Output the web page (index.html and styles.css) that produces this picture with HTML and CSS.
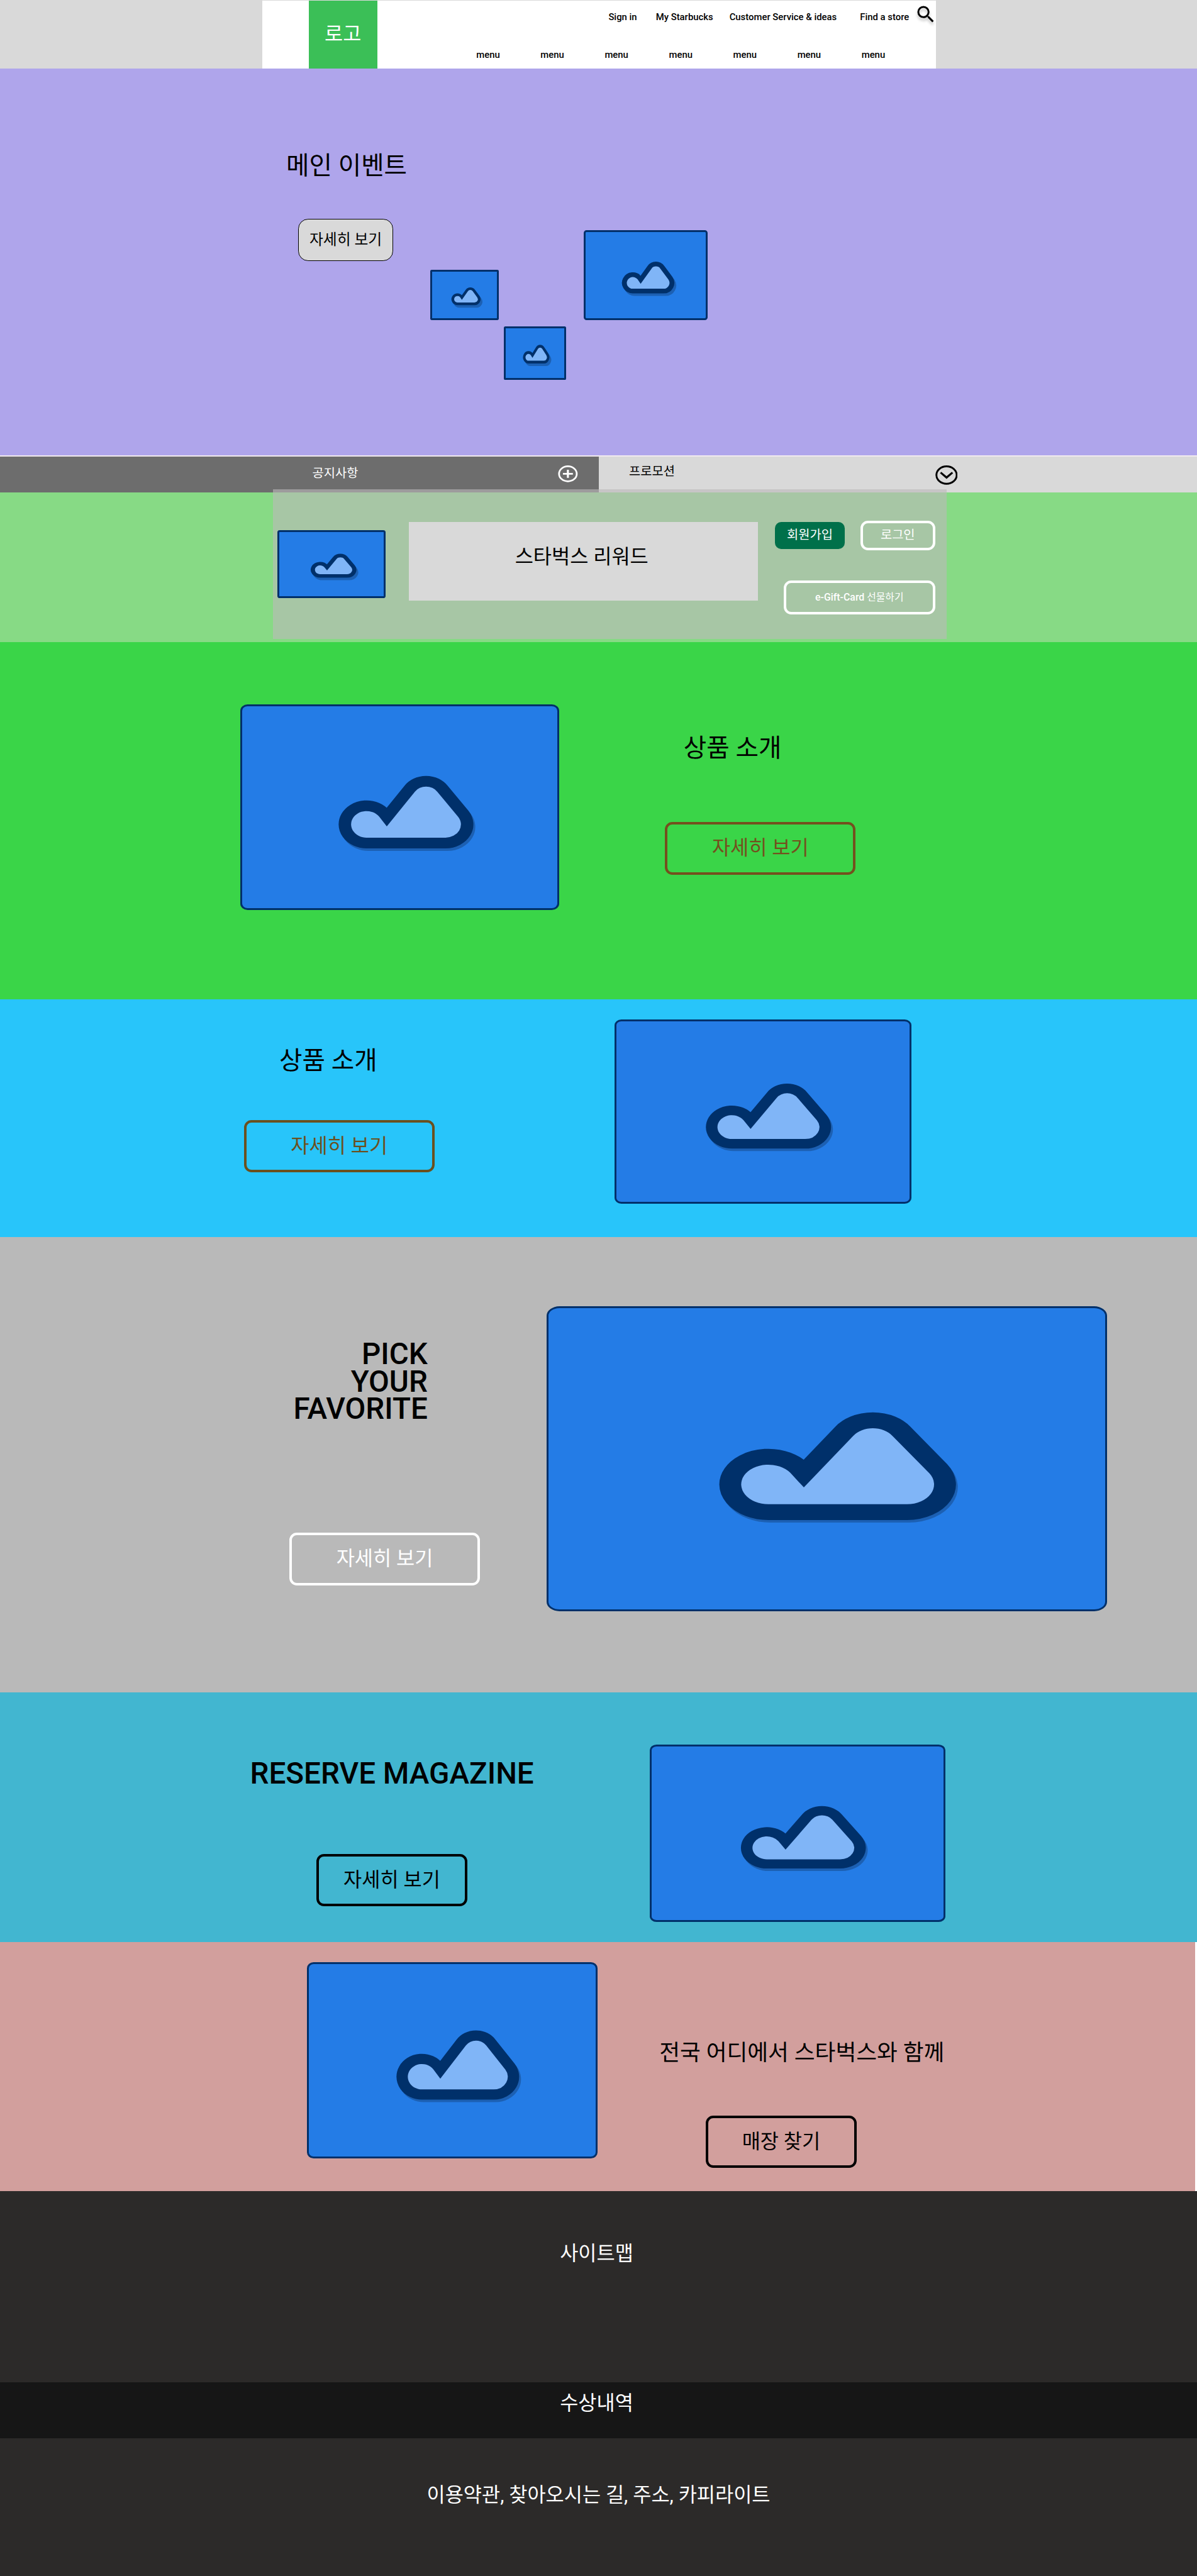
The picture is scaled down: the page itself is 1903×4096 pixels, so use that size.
FILE: index.html
```html
<!DOCTYPE html>
<html lang="ko">
<head>
<meta charset="utf-8">
<title>Starbucks</title>
<link rel="stylesheet" href="styles.css">
</head>
<body>
<svg class="defs" aria-hidden="true">
  <symbol id="picture" viewBox="0 0 256 192" preserveAspectRatio="none">
    <path d="M101.3 124.4A12.4 12.4 0 1 1 111.3 104.7L117.5 113.9L140.1 81.4A10.8 10.8 0 0 1 157.9 81.4L174.8 105A12.4 12.4 0 0 1 164.6 124.4Z" fill="#80b5f7" stroke="#00306a" stroke-width="20" paint-order="stroke"/>
  </symbol>
</svg>

<header class="header">
  <div class="header-inner">
    <div class="logo">로고</div>
    <nav class="nav">
      <div class="utility">
        <a>Sign in</a><a>My Starbucks</a><a>Customer Service &amp; ideas</a><a>Find a store</a>
        <svg class="search" viewBox="0 0 24 24"><path d="M15.5 14h-.79l-.28-.27A6.471 6.471 0 0 0 16 9.5 6.5 6.5 0 1 0 9.5 16c1.61 0 3.09-.59 4.23-1.57l.27.28v.79l5 4.99L20.49 19l-4.99-5zm-6 0C7.01 14 5 11.99 5 9.5S7.01 5 9.5 5 14 7.01 14 9.5 11.99 14 9.5 14z"/></svg>
      </div>
      <div class="menu"><a>menu</a><a>menu</a><a>menu</a><a>menu</a><a>menu</a><a>menu</a><a>menu</a></div>
    </nav>
  </div>
</header>

<main>
  <section class="hero">
    <div class="hero-copy">
      <h1 class="title">메인 이벤트</h1>
      <a class="hero-button">자세히 보기</a>
    </div>
    <div class="picture hero-a"><svg><use href="#picture"/></svg></div>
    <div class="picture hero-b"><svg><use href="#picture"/></svg></div>
    <div class="picture hero-c"><svg><use href="#picture"/></svg></div>
  </section>

  <section class="bar">
    <div class="notice">
      <span>공지사항</span>
      <svg viewBox="0 0 32 27" fill="none" stroke="#fff"><ellipse cx="16" cy="13.5" rx="14.2" ry="12" stroke-width="2.8"/><path d="M8 13.5H24" stroke-width="2.8"/><path d="M16 7V20" stroke-width="3.2"/></svg>
    </div>
    <div class="promotion">
      <span>프로모션</span>
      <svg viewBox="0 0 36 31" fill="none" stroke="#000"><ellipse cx="18" cy="15.5" rx="16.3" ry="14" stroke-width="3"/><path d="M8.500 11.500L18 19.500L27.500 11.500" stroke-width="3.2"/></svg>
    </div>
  </section>

  <section class="rewards">
    <div class="rewards-panel">
      <div class="picture rewards-picture"><svg><use href="#picture"/></svg></div>
      <h2 class="rewards-title">스타벅스 리워드</h2>
      <div class="rewards-actions">
        <a class="join">회원가입</a>
        <a class="login">로그인</a>
        <a class="gift"><b>e-Gift-Card</b>&nbsp;선물하기</a>
      </div>
    </div>
  </section>

  <section class="product-a">
    <div class="picture"><svg><use href="#picture"/></svg></div>
    <div class="copy">
      <h2 class="title">상품 소개</h2>
      <a class="button">자세히 보기</a>
    </div>
  </section>

  <section class="product-b">
    <div class="copy">
      <h2 class="title">상품 소개</h2>
      <a class="button">자세히 보기</a>
    </div>
    <div class="picture"><svg><use href="#picture"/></svg></div>
  </section>

  <section class="favorite">
    <div class="copy">
      <h2 class="display">PICK<br>YOUR<br>FAVORITE</h2>
      <a class="button">자세히 보기</a>
    </div>
    <div class="picture"><svg><use href="#picture"/></svg></div>
  </section>

  <section class="reserve">
    <div class="copy">
      <h2 class="display">RESERVE MAGAZINE</h2>
      <a class="button">자세히 보기</a>
    </div>
    <div class="picture"><svg><use href="#picture"/></svg></div>
  </section>

  <section class="store">
    <div class="picture"><svg><use href="#picture"/></svg></div>
    <div class="copy">
      <h2 class="store-title">전국 어디에서 스타벅스와 함께</h2>
      <a class="button">매장 찾기</a>
    </div>
  </section>
</main>

<footer class="footer">
  <div class="sitemap">사이트맵</div>
  <div class="awards">수상내역</div>
  <div class="legal">이용약관, 찾아오시는 길, 주소, 카피라이트</div>
</footer>
</body>
</html>
```
FILE: styles.css
```css
* { box-sizing: border-box; }

html { font-size: 9.912px; }

body {
  margin: 0;
  background: #fff;
  color: #000;
  font-family: Roboto, "Noto Sans CJK KR", sans-serif;
  font-size: 1.6rem;
  line-height: 1;
  overflow-x: hidden;
}

h1, h2 { margin: 0; font-weight: 400; }

a, span, h1, h2 { white-space: nowrap; }

section { display: flex; align-items: flex-start; }

.defs { position: absolute; width: 0; height: 0; }

/* Shared pieces */
.title { font-size: 4rem; }

.display { font-size: 4.8rem; font-weight: 500; }

.copy { display: flex; flex-direction: column; align-items: flex-start; flex: none; }

.button {
  display: flex;
  align-items: center;
  justify-content: center;
  width: 30.6rem;
  height: 8.4rem;
  border: 4px solid currentColor;
  border-radius: 1.2rem;
  font-size: 3.2rem;
}

.picture {
  flex: none;
  background: #247ce6;
  border: 3px solid #00306a;
  border-radius: 2.3% / 3.1%;
}

.picture svg {
  display: block;
  width: calc(100% + 6px);
  height: calc(100% + 6px);
  margin: -3px;
  filter: drop-shadow(3.5px 4px 0 rgba(0, 0, 0, 0.22));
}

/* Header */
.header { height: 11rem; background: #d9d9d9; padding: 1px 0 0 42.1rem; }

.header-inner { display: flex; width: 108rem; height: 100%; background: #fff; }

.logo {
  display: flex;
  align-items: center;
  justify-content: center;
  flex: none;
  width: 11rem;
  margin-left: 7.4rem;
  background: #3bbf57;
  color: #fff;
  font-size: 3.2rem;
}

.nav { flex: none; margin-left: 15.9rem; font-size: 1.5rem; font-weight: 500; }

.utility {
  display: grid;
  grid-template-columns: 7.6rem 11.8rem 20.95rem 8.7rem 3.6rem;
  height: 7.9rem;
  margin-left: 21.2rem;
  padding-top: 1.95rem;
}

.search { width: 3.6rem; height: 3.6rem; margin-top: -1.5rem; filter: drop-shadow(0 4px 2px rgba(0, 0, 0, 0.25)); }

.menu { display: grid; grid-template-columns: repeat(7, 10.3rem); padding-top: 0.1rem; }

/* Main event */
.hero { height: 62rem; background: #afa5eb; padding-left: 45.9rem; }

.hero-copy { width: 23.1rem; padding-top: 13.6rem; }

.hero-button {
  display: flex;
  align-items: center;
  justify-content: center;
  width: 15.3rem;
  height: 6.8rem;
  margin: 6.5rem 0 0 1.9rem;
  background: #d9d9d9;
  border: 1px solid #000;
  border-radius: 1.6rem;
  font-size: 2.4rem;
}

.hero-a { width: 11.05rem; height: 8.1rem; margin-top: 32.3rem; }
.hero-b { width: 10rem; height: 8.5rem; margin: 41.4rem 0 0 0.8rem; }
.hero-c { width: 19.9rem; height: 14.5rem; margin: 25.9rem 0 0 2.8rem; }

/* Notice and promotion bar */
.bar { height: 6rem; border-top: 2px solid #f1eaef; align-items: stretch; font-size: 2rem; }

.notice, .promotion { display: flex; align-items: flex-start; width: 96rem; height: 100%; }

.notice { background: #6d6d6d; color: #fff; padding: 1.8rem 0 0 50.1rem; }
.notice span { width: 39.4rem; }
.notice svg { width: 3.2rem; height: 2.7rem; margin-top: -0.3rem; }

.promotion { background: #d9d9d9; padding: 1.5rem 0 0 4.9rem; }
.promotion span { width: 49.1rem; }
.promotion svg { width: 3.6rem; height: 3.1rem; }

/* Rewards */
.rewards { height: 24rem; background: #87da85; padding-left: 43.8rem; }

.rewards-panel {
  display: flex;
  align-items: flex-start;
  position: relative;
  width: 108rem;
  height: 24rem;
  margin-top: -0.5rem;
  background: rgba(188, 184, 186, 0.61);
}

.rewards-picture { width: 17.35rem; height: 10.9rem; margin: 6.5rem 0 0 0.73rem; }

.rewards-title {
  width: 56rem;
  height: 12.7rem;
  margin: 5.2rem 0 0 3.72rem;
  padding: 4.1rem 0 0 17rem;
  background: #d9d9d9;
  font-size: 3.2rem;
}

.rewards-actions {
  display: grid;
  grid-template-columns: 11.2rem 12rem;
  column-gap: 2.5rem;
  row-gap: 4.8rem;
  margin: 5rem 0 0 2.7rem;
  color: #fff;
  font-size: 2rem;
}

.join, .login, .gift { display: flex; align-items: center; justify-content: center; border-radius: 1.2rem; }

.join { height: 4.4rem; margin-top: 0.2rem; background: #00704a; border-radius: 1rem; }
.login { height: 4.8rem; border: 4px solid #fff; }
.gift { grid-column: 1 / 3; justify-self: end; width: 24.3rem; height: 5.5rem; border: 4px solid #fff; font-size: 1.6rem; }
.gift b { font-weight: 500; }

/* Products */
.product-a { height: 57.3rem; background: #3ad548; padding-left: 38.5rem; }
.product-a .picture { width: 51.2rem; height: 33rem; margin-top: 10rem; }
.product-a .copy { padding: 15rem 0 0 16.95rem; }
.product-a .title { margin-left: 3rem; }
.product-a .button { margin-top: 9.9rem; color: #74501e; }

.product-b { height: 38.2rem; background: #28c5fa; padding-left: 39.1rem; }
.product-b .copy { width: 59.5rem; padding-top: 7.9rem; }
.product-b .title { margin-left: 5.7rem; }
.product-b .button { margin-top: 7.5rem; color: #6b501e; }
.product-b .picture { width: 47.55rem; height: 29.6rem; margin-top: 3.2rem; }

/* Pick your favorite */
.favorite { height: 73rem; background: #b9b9b9; padding-left: 46.4rem; }
.favorite .copy { width: 41.3rem; padding-top: 16.6rem; }
.favorite .display { width: 22.2rem; line-height: 4.4rem; text-align: right; }
.favorite .button { margin-top: 17.6rem; color: #fff; }
.favorite .picture { width: 89.9rem; height: 49rem; margin-top: 11rem; }

/* Reserve magazine */
.reserve { height: 40rem; background: #42b6d0; padding-left: 40.1rem; }
.reserve .copy { width: 64.1rem; padding-top: 10.7rem; }
.reserve .button { width: 24.3rem; margin: 10.4rem 0 0 10.6rem; }
.reserve .picture { width: 47.45rem; height: 28.4rem; margin-top: 8.4rem; }

/* Store finder */
.store { height: 40rem; margin-right: 3px; background: #d29f9d; padding-left: 49.25rem; }
.store .picture { width: 46.6rem; height: 31.5rem; margin-top: 3.3rem; }
.store .copy { padding: 16.1rem 0 0 9.9rem; }
.store-title { font-size: 3.6rem; }
.store .button { width: 24.3rem; margin: 8.2rem 0 0 7.4rem; }

/* Footer */
.footer { color: #fff; font-size: 3.2rem; text-align: center; background: #2c2a29; }

.sitemap { height: 30.7rem; padding: 8.5rem 0.6rem 0 0; }
.awards { height: 9rem; padding: 1.8rem 0.6rem 0 0; background: #161616; }
.legal { height: 22.1rem; padding-top: 7.5rem; }
```
